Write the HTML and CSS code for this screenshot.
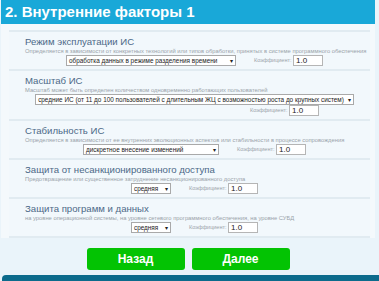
FILE: index.html
```
<!DOCTYPE html>
<html lang="ru">
<head>
    <meta charset="UTF-8">
    <meta name="viewport" content="width=device-width, initial-scale=1.0">
    <title>Внутренние факторы</title>
    <link rel="stylesheet" href="styles.css">
</head>
<body>
    <div class="page">
        <header class="title-bar">
            <h1>2. Внутренние факторы 1</h1>
        </header>

        <main class="factors">
            <section class="factor">
                <h2>Режим эксплуатации ИС</h2>
                <p class="hint">Определяется в зависимости от конкретных технологий или типов обработки, принятых в системе программного обеспечения</p>
                <div class="controls">
                    <span class="select sel-mode">обработка данных в режиме разделения времени <i>▾</i></span>
                    <span class="coef">Коэффициент: <span class="num">1.0</span></span>
                </div>
            </section>

            <section class="factor">
                <h2>Масштаб ИС</h2>
                <p class="hint">Масштаб может быть определен количеством одновременно работающих пользователей</p>
                <div class="controls">
                    <span class="select sel-scale">средние ИС (от 11 до 100 пользователей с длительным ЖЦ с возможностью роста до крупных систем) <i>▾</i></span>
                </div>
                <div class="controls coef-row">
                    <span class="coef">Коэффициент: <span class="num">1.0</span></span>
                </div>
            </section>

            <section class="factor">
                <h2>Стабильность ИС</h2>
                <p class="hint">Определяется в зависимости от ее внутренних эволюционных аспектов или стабильности в процессе сопровождения</p>
                <div class="controls">
                    <span class="select sel-stab">дискретное внесение изменений <i>▾</i></span>
                    <span class="coef">Коэффициент: <span class="num">1.0</span></span>
                </div>
            </section>

            <section class="factor">
                <h2>Защита от несанкционированного доступа</h2>
                <p class="hint">Предотвращение или существенное затруднение несанкционированного доступа</p>
                <div class="controls">
                    <span class="select sel-level">средняя <i>▾</i></span>
                    <span class="coef">Коэффициент: <span class="num">1.0</span></span>
                </div>
            </section>

            <section class="factor">
                <h2>Защита программ и данных</h2>
                <p class="hint">на уровне операционной системы, на уровне сетевого программного обеспечения, на уровне СУБД</p>
                <div class="controls">
                    <span class="select sel-level">средняя <i>▾</i></span>
                    <span class="coef">Коэффициент: <span class="num">1.0</span></span>
                </div>
            </section>
        </main>

        <div class="buttons">
            <button class="btn">Назад</button>
            <button class="btn">Далее</button>
        </div>
    </div>
    <div class="footer-bar"></div>
</body>
</html>
```

FILE: styles.css
```
body {
    margin: 0;
    padding: 0;
    background-color: #eaf4fa;
    font-family: "Liberation Sans", Arial, sans-serif;
    overflow: hidden;
}

.page {
    margin: 0 4px 0 1px;
}

.title-bar {
    background-color: #19a8d8;
    height: 24px;
    padding-left: 4px;
}

.title-bar h1 {
    margin: 0;
    color: #fff;
    font-size: 15px;
    line-height: 24px;
    font-weight: bold;
}

.factors {
    background-color: #f4f9fc;
    padding-top: 6px;
}

.factor {
    border-top: 2px solid #e1ebf1;
    margin: 0 5px 0 8px;
    padding: 4px 0 3px 16px;
    background-color: #f2f8fc;
}

.factor:last-child {
    border-bottom: 2px solid #e1ebf1;
}

.factor h2 {
    margin: 0;
    font-size: 9.6px;
    line-height: 12px;
    font-weight: normal;
    color: #4c6887;
}

.hint {
    margin: 0;
    font-size: 5.8px;
    line-height: 7px;
    color: #9aa3aa;
    white-space: nowrap;
}

.controls {
    display: flex;
    justify-content: center;
    align-items: center;
    gap: 18px;
    height: 11px;
    padding-right: 6px;
}

.coef-row {
    padding-left: 180px;
}

.select {
    display: inline-flex;
    align-items: center;
    justify-content: space-between;
    gap: 4px;
    height: 9px;
    padding: 0 2px;
    border: 1px solid #a9a9a9;
    background-color: #fff;
    font-size: 6.4px;
    color: #222;
    white-space: nowrap;
}

.select i {
    font-style: normal;
    font-size: 6px;
}

.sel-mode {
    width: 164px;
}

.sel-stab {
    width: 130px;
}

.sel-level {
    width: 34px;
}

.coef {
    font-size: 5.5px;
    color: #9aa3aa;
    white-space: nowrap;
}

.num {
    display: inline-block;
    width: 26px;
    height: 9px;
    line-height: 9px;
    padding-left: 2px;
    border: 1px solid #b5b5b5;
    background-color: #fff;
    font-size: 8px;
    color: #222;
    vertical-align: middle;
}

.buttons {
    display: flex;
    justify-content: center;
    gap: 7px;
    padding: 10px 0 5px;
}

.btn {
    width: 98px;
    height: 22px;
    border: none;
    border-radius: 3px;
    background-color: #03c303;
    color: #fff;
    font-family: "Liberation Sans", Arial, sans-serif;
    font-size: 12px;
    font-weight: bold;
}

.footer-bar {
    height: 6px;
    margin-left: 2px;
    border-radius: 4px 0 0 0;
    background-color: #0c6b8c;
}
```
